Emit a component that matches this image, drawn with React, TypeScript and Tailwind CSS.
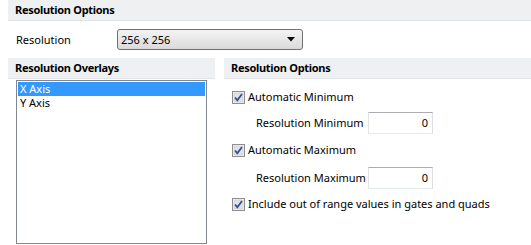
import React from "react";

function Check() {
  return (
    <svg width="13" height="13" viewBox="0 0 13 13" className="shrink-0">
      <rect x="0.5" y="0.5" width="12" height="12" fill="#f4f4f4" stroke="#8e8f8f" />
      <rect x="2" y="2" width="9" height="9" fill="#dfe3ea" stroke="#c4c9d2" strokeWidth="0.6" />
      <path d="M3 6.5 L5.3 9.2 L10 3" fill="none" stroke="#3b4f8c" strokeWidth="1.8" />
    </svg>
  );
}

function Header({ children }: { children: React.ReactNode }) {
  return (
    <div className="h-[21px] bg-[#eff0f2] border-b border-[#e2e4e8] flex items-center pl-[7px] font-bold text-[11px] tracking-[-0.3px] text-black whitespace-nowrap">
      {children}
    </div>
  );
}

export default function App() {
  return (
    <div
      className="w-[531px] h-[245px] bg-white text-[11px] leading-[14px] text-black overflow-hidden whitespace-nowrap"
      style={{ fontFamily: '"Noto Sans", "Open Sans", sans-serif' }}
    >
      <div className="ml-[8px]">
        <Header>Resolution Options</Header>
      </div>
      <div className="mt-[8px] h-[21px] flex items-center">
        <div className="pl-[16px] w-[117px]">Resolution</div>
        <div className="w-[186px] h-[21px] rounded-[3px] border border-[#707070] bg-linear-to-b from-[#f4f4f4] to-[#dadada] flex items-center pl-[3px] pr-[7px]">
          <span className="flex-1">256 x 256</span>
          <svg width="8" height="5" viewBox="0 0 8 5">
            <path d="M0 0 H8 L4 4.5 Z" fill="#000" />
          </svg>
        </div>
      </div>
      <div className="mt-[8px] flex gap-[9px]">
        <div className="ml-[8px] w-[207px]">
          <Header>Resolution Overlays</Header>
          <div className="mt-[1px] ml-[8px] w-[191px] h-[164px] border border-[#828790] p-[1px]">
            <div className="h-[14px] bg-[#3399ff] text-white flex items-center pl-[2px]">X Axis</div>
            <div className="h-[14px] flex items-center pl-[2px]">Y Axis</div>
          </div>
        </div>
        <div className="flex-1">
          <Header>Resolution Options</Header>
          <div className="pl-[8px] mt-[10px] h-[16px] flex items-center gap-[3px]">
            <Check />
            <span>Automatic Minimum</span>
          </div>
          <div className="pl-[32px] mt-[7px] h-[22px] flex items-center">
            <div className="w-[112px]">Resolution Minimum</div>
            <div className="w-[65px] h-[22px] border border-[#abadb3] border-l-[#e2e3ea] border-r-[#dbdfe6] border-b-[#e3e9ef] flex items-center justify-end pr-[4px]">0</div>
          </div>
          <div className="pl-[8px] mt-[8px] h-[16px] flex items-center gap-[3px]">
            <Check />
            <span>Automatic Maximum</span>
          </div>
          <div className="pl-[32px] mt-[9px] h-[22px] flex items-center">
            <div className="w-[112px]">Resolution Maximum</div>
            <div className="w-[65px] h-[22px] border border-[#abadb3] border-l-[#e2e3ea] border-r-[#dbdfe6] border-b-[#e3e9ef] flex items-center justify-end pr-[4px]">0</div>
          </div>
          <div className="pl-[8px] mt-[7px] h-[16px] flex items-center gap-[3px]">
            <Check />
            <span>Include out of range values in gates and quads</span>
          </div>
        </div>
      </div>
    </div>
  );
}
